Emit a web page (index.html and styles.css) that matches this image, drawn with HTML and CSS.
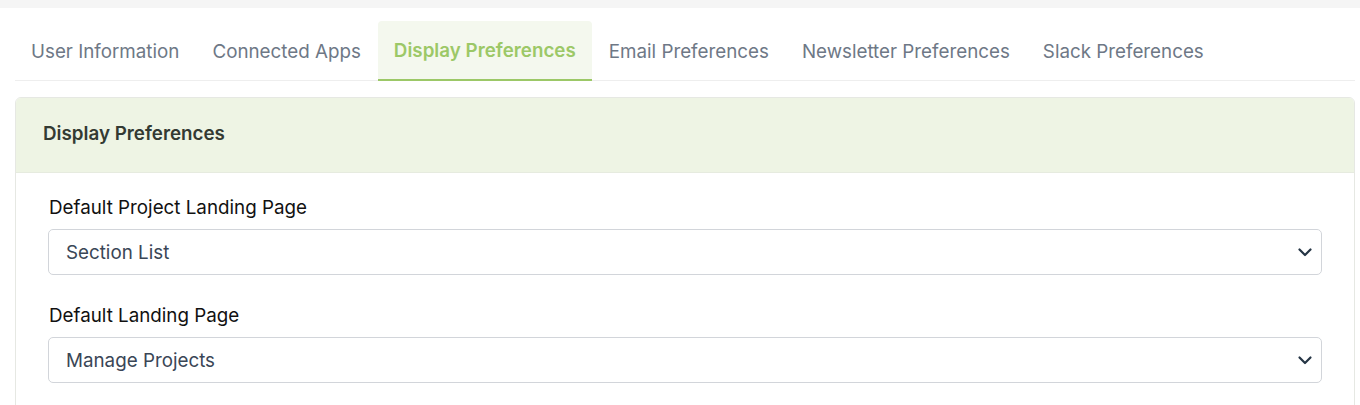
FILE: index.html
```html
<!DOCTYPE html>
<html lang="en">
<head>
    <meta charset="UTF-8">
    <meta name="viewport" content="width=device-width, initial-scale=1.0">
    <title>Display Preferences</title>
    <link rel="stylesheet" href="styles.css">
</head>
<body>
    <div class="page">
        <ul class="tabs">
            <li class="tab">User Information</li>
            <li class="tab">Connected Apps</li>
            <li class="tab active">Display Preferences</li>
            <li class="tab">Email Preferences</li>
            <li class="tab">Newsletter Preferences</li>
            <li class="tab">Slack Preferences</li>
        </ul>

        <div class="card">
            <div class="card-header">Display Preferences</div>
            <div class="card-body">
                <div class="field">
                    <label for="project-landing">Default Project Landing Page</label>
                    <div class="select-wrap">
                        <select id="project-landing">
                            <option>Section List</option>
                        </select>
                        <svg class="chevron" viewBox="0 0 16 16" width="16" height="16"><path d="M2.5 5.5 8 11l5.5-5.5" fill="none" stroke="#253545" stroke-width="2.2" stroke-linecap="round" stroke-linejoin="round"/></svg>
                    </div>
                </div>
                <div class="field">
                    <label for="landing">Default Landing Page</label>
                    <div class="select-wrap">
                        <select id="landing">
                            <option>Manage Projects</option>
                        </select>
                        <svg class="chevron" viewBox="0 0 16 16" width="16" height="16"><path d="M2.5 5.5 8 11l5.5-5.5" fill="none" stroke="#253545" stroke-width="2.2" stroke-linecap="round" stroke-linejoin="round"/></svg>
                    </div>
                </div>
            </div>
        </div>
    </div>
</body>
</html>
```

FILE: styles.css
```css
body { margin: 0; font-family: Inter, "Noto Sans", sans-serif; background: #f5f5f5; }
.page { margin-top: 8px; background: #fff; padding: 13px 5px 0 15px; height: 397px; box-sizing: border-box; overflow: hidden; }
.tabs { list-style: none; margin: 0; padding: 0; display: flex; border-bottom: 1px solid #eeeeee; }
.tab { padding: 1px 16px 0; height: 58px; line-height: 59px; font-size: 18.8px; color: #6e7886; margin-right: 1px; }
.tab.active { background: #f4f8ee; color: #9cc867; font-weight: 600; border-radius: 4px 4px 0 0; border-bottom: 2px solid #9cc867; margin-bottom: -1px; height: 57px; line-height: 58px; }
.card { margin-top: 16px; border: 1px solid #e6e8e3; border-radius: 6px; overflow: hidden; }
.card-header { background: #eef4e4; height: 74px; line-height: 72px; padding: 0 27px; font-size: 18.8px; font-weight: 600; color: #333a33; border-bottom: 1px solid #e6ebdf; }
.card-body { padding: 22px 32px 32px 32px; }
.field { margin-bottom: 28px; }
.field:last-child { margin-bottom: 0; }
.field label { display: block; font-size: 18.8px; color: #111; margin-left: 1px; margin-bottom: 8px; line-height: 26px; }
.select-wrap { position: relative; }
.select-wrap select { width: 100%; height: 46px; appearance: none; border: 1px solid #d2d5da; border-radius: 5px; background: #fff; padding: 0 17px; font-family: Inter, sans-serif; font-size: 18.8px; color: #3a4656; }
.chevron { position: absolute; right: 9px; top: 15px; pointer-events: none; }
```
